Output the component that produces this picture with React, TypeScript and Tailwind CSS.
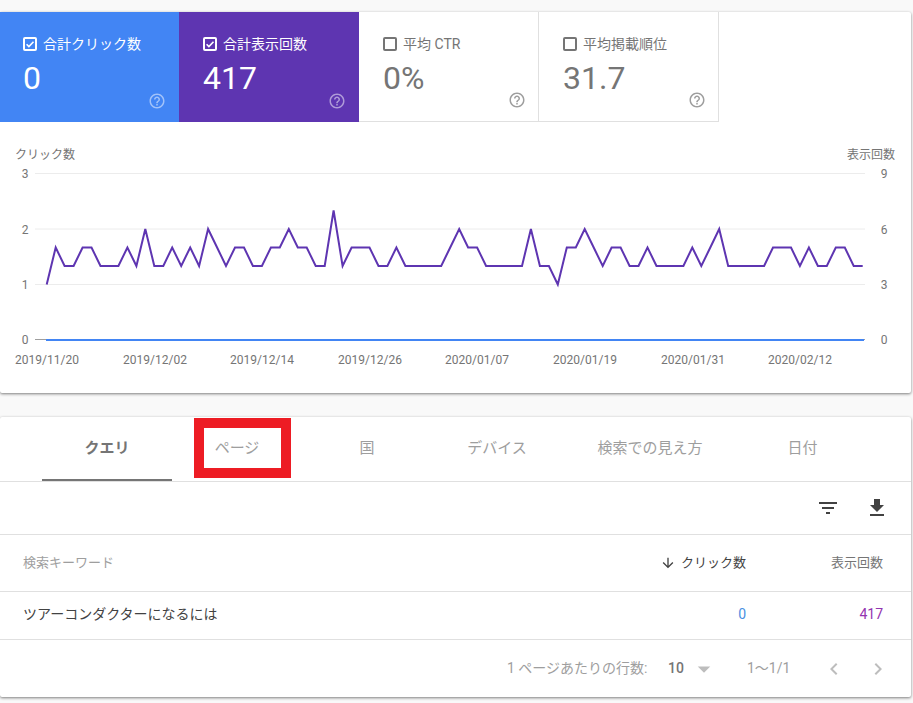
const FONT = { fontFamily: 'Roboto, "Noto Sans CJK JP", sans-serif' };

const counts = [
  3,5,4,4,5,5,4,4,4,5,4,6,4,4,5,4,5,4,6,5,4,5,5,4,4,5,5,6,5,5,4,4,7,4,5,5,5,4,4,5,4,4,4,4,4,5,6,
  5,5,4,4,4,4,4,6,4,4,3,5,5,6,5,4,5,5,4,4,5,4,4,4,4,5,4,5,6,4,4,4,4,4,5,5,5,4,5,4,4,5,5,4,4,
];
const points = counts
  .map((c, i) => `${(46.7 + i * 8.967).toFixed(1)},${(218 - c * 18.5).toFixed(1)}`)
  .join(" ");

const HELP =
  "M11 18h2v-2h-2v2zm1-16C6.48 2 2 6.48 2 12s4.48 10 10 10 10-4.48 10-10S17.52 2 12 2zm0 18c-4.41 0-8-3.59-8-8s3.59-8 8-8 8 3.59 8 8-3.59 8-8 8zm0-14c-2.21 0-4 1.79-4 4h2c0-1.1.9-2 2-2s2 .9 2 2c0 2-3 1.75-3 5h2c0-2.25 3-2.5 3-5 0-2.21-1.79-4-4-4z";

function Icon({ d, size, className }: { d: string; size: number; className?: string }) {
  return (
    <svg width={size} height={size} viewBox="0 0 24 24" className={className} fill="currentColor">
      <path d={d} />
    </svg>
  );
}

function Tile({
  label,
  value,
  checked,
  className,
  helpClass,
}: {
  label: string;
  value: string;
  checked: boolean;
  className: string;
  helpClass: string;
}) {
  return (
    <div className={`relative h-[110px] shrink-0 pt-[22px] ${className}`}>
      <div className="flex h-[20px] items-center gap-[6px] text-[14px] leading-[20px]">
        <svg width="14" height="14" viewBox="0 0 14 14" className="shrink-0">
          <rect x="1" y="1" width="12" height="12" rx="1" fill="none" stroke="currentColor" strokeWidth="2" />
          {checked && <path d="M3.6 7.2l2.3 2.3 4.6-4.7" fill="none" stroke="currentColor" strokeWidth="1.6" />}
        </svg>
        <span>{label}</span>
      </div>
      <div className="mt-[2px] text-[32px] leading-[44px]">{value}</div>
      <Icon d={HELP} size={18} className={`absolute bottom-[12px] ${helpClass}`} />
    </div>
  );
}

function Chart() {
  const grid = [
    { y: 51.5, l: "3", r: "9" },
    { y: 107, l: "2", r: "6" },
    { y: 162.5, l: "1", r: "3" },
  ];
  const dates = [
    ["2019/11/20", 47],
    ["2019/12/02", 155],
    ["2019/12/14", 262],
    ["2019/12/26", 370],
    ["2020/01/07", 477],
    ["2020/01/19", 585],
    ["2020/01/31", 693],
    ["2020/02/12", 800],
  ] as const;
  return (
    <svg width="911" height="271" viewBox="0 0 911 271" className="block" style={FONT}>
      <text x="15" y="37" fontSize="12" fill="#757575">クリック数</text>
      <text x="895" y="37" fontSize="12" fill="#757575" textAnchor="end">表示回数</text>
      {grid.map((g) => (
        <g key={g.y}>
          <line x1="35" x2="865" y1={g.y} y2={g.y} stroke="#ececec" />
          <text x="25" y={g.y + 4.5} fontSize="12" fill="#757575" textAnchor="middle">{g.l}</text>
          <text x="884" y={g.y + 4.5} fontSize="12" fill="#757575" textAnchor="middle">{g.r}</text>
        </g>
      ))}
      <line x1="35" x2="865" y1="217.5" y2="217.5" stroke="#9e9e9e" />
      <text x="25" y="222" fontSize="12" fill="#757575" textAnchor="middle">0</text>
      <text x="884" y="222" fontSize="12" fill="#757575" textAnchor="middle">0</text>
      <polyline points={points} fill="none" stroke="#5e35b1" strokeWidth="2" strokeLinejoin="miter" />
      <line x1="46" x2="864" y1="218" y2="218" stroke="#4285f4" strokeWidth="2" />
      {dates.map(([d, x]) => (
        <text key={d} x={x} y="242" fontSize="12" fill="#757575" textAnchor="middle">{d}</text>
      ))}
    </svg>
  );
}

function Tab({ label, className, active }: { label: string; className: string; active?: boolean }) {
  return (
    <div
      className={`relative flex h-full items-center justify-center pb-[2px] text-[15px] ${className} ${
        active ? "font-bold text-[#757575]" : "text-[#9e9e9e]"
      }`}
    >
      {label}
      {active && <div className="absolute right-0 bottom-0 left-0 h-[2px] bg-[#757575]" />}
    </div>
  );
}

export default function App() {
  return (
    <div className="h-[703px] w-[913px] overflow-hidden bg-[#f9f9f9] pt-[12px]" style={FONT}>
      <div className="h-[381px] w-[911px] rounded-[2px] bg-white shadow-[0_1px_3px_rgba(0,0,0,0.5)]">
        <div className="flex">
          <Tile label="合計クリック数" value="0" checked className="w-[179px] bg-[#4285f4] pl-[23px] text-white" helpClass="right-[13px] text-white/50" />
          <Tile label="合計表示回数" value="417" checked className="w-[180px] bg-[#5e35b1] pl-[24px] text-white" helpClass="right-[13px] text-white/50" />
          <Tile label="平均 CTR" value="0%" checked={false} className="w-[180px] border-r border-b border-[#e0e0e0] pl-[24px] text-[#757575]" helpClass="right-[12px] text-[#9e9e9e]" />
          <Tile label="平均掲載順位" value="31.7" checked={false} className="w-[180px] border-r border-b border-[#e0e0e0] pl-[24px] text-[#757575]" helpClass="right-[12px] text-[#9e9e9e]" />
        </div>
        <Chart />
      </div>

      <div className="relative mt-[24px] h-[280px] w-[911px] rounded-[2px] bg-white shadow-[0_1px_3px_rgba(0,0,0,0.5)]">
        <div className="flex h-[65px] border-b border-[#e0e0e0] pl-[42px]">
          <Tab label="クエリ" className="w-[130px]" active />
          <Tab label="ページ" className="w-[130px]" />
          <Tab label="国" className="w-[130px]" />
          <Tab label="デバイス" className="w-[130px]" />
          <Tab label="検索での見え方" className="w-[176px]" />
          <Tab label="日付" className="w-[129px]" />
        </div>
        <div className="absolute top-[1px] left-[194px] h-[60px] w-[97px] border-[10px] border-[#ed1c24]" />

        <div className="flex h-[53px] items-center justify-end gap-[25px] border-b border-[#e0e0e0] pr-[22px] text-[#424242]">
          <Icon d="M10 18h4v-2h-4v2zM3 6v2h18V6H3zm3 7h12v-2H6v2z" size={24} />
          <Icon d="M19 9h-4V3H9v6H5l7 7 7-7zM5 18v2h14v-2H5z" size={24} />
        </div>

        <div className="flex h-[57px] items-center border-b border-[#e0e0e0] pr-[28px] pl-[23px] text-[13px] text-[#9e9e9e]">
          <div className="flex-1">検索キーワード</div>
          <div className="flex items-center gap-[5px] text-[#424242]">
            <Icon d="M20 12l-1.41-1.41L13 16.17V4h-2v12.17l-5.58-5.59L4 12l8 8 8-8z" size={16} />
            クリック数
          </div>
          <div className="w-[137px] text-right text-[#757575]">表示回数</div>
        </div>

        <div className="flex h-[48px] items-center border-b border-[#e0e0e0] pr-[28px] pb-[2px] pl-[23px] text-[14px] text-[#424242]">
          <div className="flex-1">ツアーコンダクターになるには</div>
          <div className="text-[#4a90e2]">0</div>
          <div className="w-[137px] text-right text-[#9334b0]">417</div>
        </div>

        <div className="flex h-[57px] items-center text-[14px] text-[#9e9e9e]">
          <div className="w-[647px] pl-[507px] whitespace-nowrap">1 ページあたりの行数:</div>
          <div className="ml-[21px] font-medium text-[#757575]">10</div>
          <Icon d="M7 10l5 5 5-5z" size={30} className="ml-[5px] text-[#bdbdbd]" />
          <div className="ml-[28px] whitespace-nowrap">1〜1/1</div>
          <Icon d="M15.41 7.41L14 6l-6 6 6 6 1.41-1.41L10.83 12z" size={24} className="ml-[32px] text-[#bdbdbd]" />
          <Icon d="M10 6L8.59 7.41 13.17 12l-4.58 4.59L10 18l6-6z" size={24} className="ml-[20px] text-[#bdbdbd]" />
        </div>
      </div>
    </div>
  );
}
